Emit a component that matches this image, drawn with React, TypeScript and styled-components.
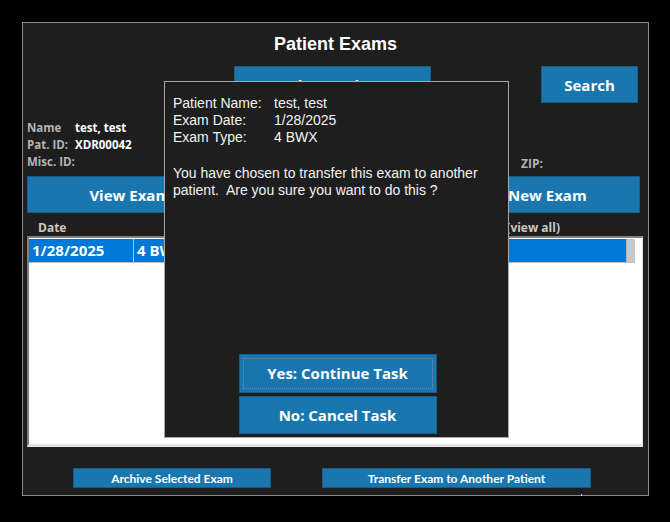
import React from 'react';
import styled, { createGlobalStyle } from 'styled-components';

const GlobalStyle = createGlobalStyle`
	html, body {
		margin: 0;
		padding: 0;
		background: #000000;
	}
	body {
		width: 670px;
		height: 522px;
		overflow: hidden;
	}
`;

const App: React.FC = () => {
	return (
		<>
			<GlobalStyle />
			<Page>
				<Window>
					<Title>Patient Exams</Title>
					<TopRow>
						<BlueButton $width={197} $height={37} $size={15} $drop={1}>
							Select Patient
						</BlueButton>
						<BlueButton $width={97} $height={37} $size={15}>
							Search
						</BlueButton>
					</TopRow>
					<InfoRow>
						<InfoGrid>
							<Label>Name</Label>
							<Value>test, test</Value>
							<Label>Pat. ID:</Label>
							<Value>XDR00042</Value>
							<Label>Misc. ID:</Label>
							<Value />
						</InfoGrid>
						<Zip>ZIP:</Zip>
					</InfoRow>
					<ActionRow>
						<BlueButton $width={263} $height={37} $size={15}>
							View Exam Images
						</BlueButton>
						<BlueButton $width={239} $height={37} $size={15}>
							Create New Exam
						</BlueButton>
					</ActionRow>
					<HeaderRow>
						<ColHeader>Date</ColHeader>
						<ColHeader>Exams (view all)</ColHeader>
					</HeaderRow>
					<Table>
						<SelectedRow>
							<DateCell>1/28/2025</DateCell>
							<TypeCell>4 BWX</TypeCell>
							<Scroll />
						</SelectedRow>
					</Table>
					<BottomRow>
						<SmallButton $width={198}>Archive Selected Exam</SmallButton>
						<SmallButton $width={269}>Transfer Exam to Another Patient</SmallButton>
					</BottomRow>
					<Tick />
				</Window>
				<Dialog>
					<DetailGrid>
						<span>Patient Name:</span>
						<span>test, test</span>
						<span>Exam Date:</span>
						<span>1/28/2025</span>
						<span>Exam Type:</span>
						<span>4 BWX</span>
					</DetailGrid>
					<Message>
						You have chosen to transfer this exam to another patient.&nbsp; Are you sure you want to do this ?
					</Message>
					<DialogButtons>
						<BlueButton $width={198} $height={39} $size={15} $focused>
							Yes: Continue Task
						</BlueButton>
						<BlueButton $width={198} $height={38} $size={15}>
							No: Cancel Task
						</BlueButton>
					</DialogButtons>
				</Dialog>
			</Page>
		</>
	);
};

const Page = styled.div`
	position: relative;
	width: 670px;
	height: 522px;
	padding: 22px;
	box-sizing: border-box;
`;

const Window = styled.div`
	position: relative;
	width: 627px;
	height: 474px;
	box-sizing: border-box;
	background: #1e1e1e;
	border: 1px solid #8a8a8a;
	display: flex;
	flex-direction: column;
	padding: 0 4px 0 4px;
`;

const Title = styled.div`
	font-family: 'Liberation Sans', Arial, sans-serif;
	font-weight: bold;
	font-size: 18px;
	color: #ffffff;
	text-align: center;
	height: 24px;
	line-height: 24px;
	margin-top: 9px;
`;

const TopRow = styled.div`
	display: flex;
	justify-content: flex-end;
	gap: 110px;
	padding-right: 6px;
	margin-top: 10px;
`;

const BlueButton = styled.div<{
	$width: number;
	$height: number;
	$size: number;
	$focused?: boolean;
	$drop?: number;
}>`
	position: relative;
	width: ${(p) => p.$width}px;
	height: ${(p) => p.$height}px;
	box-sizing: border-box;
	background: #1a76ae;
	border: 1px solid #175d88;
	color: #ffffff;
	font-family: 'Open Sans', 'DejaVu Sans', sans-serif;
	font-weight: 700;
	font-size: ${(p) => p.$size}px;
	display: flex;
	align-items: center;
	justify-content: center;
	padding-top: ${(p) => p.$drop ?? 0}px;
	${(p) =>
		p.$focused &&
		`
		&::after {
			content: '';
			position: absolute;
			inset: 3px;
			border: 1px dotted #7d8c96;
		}
	`}
`;

const InfoRow = styled.div`
	display: flex;
	align-items: flex-end;
	margin-top: 16px;
`;

const InfoGrid = styled.div`
	display: grid;
	grid-template-columns: 48px auto;
	font-family: 'Open Sans', 'DejaVu Sans', sans-serif;
	font-size: 11.5px;
	font-weight: 700;
	line-height: 17px;
	width: 200px;
`;

const Label = styled.span`
	color: #b4b4b4;
`;

const Value = styled.span`
	color: #ffffff;
	min-height: 17px;
`;

const Zip = styled.span`
	margin-left: 294px;
	font-family: 'Open Sans', 'DejaVu Sans', sans-serif;
	font-size: 12px;
	font-weight: 700;
	color: #b4b4b4;
	line-height: 17px;
	position: relative;
	top: 2px;
`;

const ActionRow = styled.div`
	display: flex;
	justify-content: space-between;
	margin-top: 6px;
	padding-right: 4px;
`;

const HeaderRow = styled.div`
	display: flex;
	justify-content: space-between;
	padding: 0 84px 0 11px;
	height: 23px;
	align-items: center;
`;

const ColHeader = styled.span`
	font-family: 'Open Sans', 'DejaVu Sans', sans-serif;
	font-size: 12px;
	font-weight: 700;
	color: #c8c8c8;
	position: relative;
	top: 3px;
`;

const Table = styled.div`
	width: 616px;
	height: 211px;
	box-sizing: border-box;
	background: #ffffff;
	border-top: 2px solid #808080;
	border-left: 2px solid #808080;
	border-bottom: 3px solid #e3e3e3;
	border-right: 1px solid #e3e3e3;
	padding: 1px 7px 0 0;
`;

const SelectedRow = styled.div`
	display: flex;
	height: 23px;
	background: #0078d7;
	border-bottom: 1px solid #c0c0c0;
`;

const DateCell = styled.div`
	width: 101px;
	padding-left: 3px;
	border-right: 1px solid #c0c0c0;
	font-family: 'Open Sans', 'DejaVu Sans', sans-serif;
	font-weight: 700;
	font-size: 15px;
	color: #ffffff;
	line-height: 23px;
`;

const TypeCell = styled(DateCell)`
	flex: 1;
	border-right: none;
`;

const Scroll = styled.div`
	width: 8px;
	background: #c8c8c8;
	border-left: 1px dotted #a0a0a0;
`;

const BottomRow = styled.div`
	display: flex;
	gap: 51px;
	padding-left: 46px;
	margin-top: 21px;
`;

const SmallButton = styled.div<{ $width: number }>`
	width: ${(p) => p.$width}px;
	height: 20px;
	box-sizing: border-box;
	background: #1a76ae;
	border: 1px solid #175d88;
	color: #ffffff;
	font-family: Lato, 'Open Sans', sans-serif;
	font-weight: 700;
	font-size: 12px;
	display: flex;
	align-items: center;
	justify-content: center;
`;

const Tick = styled.div`
	position: absolute;
	left: 558px;
	bottom: -1px;
	width: 1px;
	height: 2px;
	background: #cfcfcf;
`;

const Dialog = styled.div`
	position: absolute;
	left: 164px;
	top: 81px;
	width: 345px;
	height: 357px;
	box-sizing: border-box;
	background: #1e1e1e;
	border: 1px solid #a8a8a8;
	padding: 13px 8px 3px 8px;
	display: flex;
	flex-direction: column;
	font-family: 'Liberation Sans', Arial, sans-serif;
	font-size: 14px;
	line-height: 17px;
	color: #f2f2f2;
`;

const DetailGrid = styled.div`
	display: grid;
	grid-template-columns: 101px auto;
`;

const Message = styled.div`
	margin-top: 19px;
	padding-right: 4px;
`;

const DialogButtons = styled.div`
	margin-top: auto;
	display: flex;
	flex-direction: column;
	align-items: center;
	gap: 3px;
	padding-left: 2px;
`;

export default App;
